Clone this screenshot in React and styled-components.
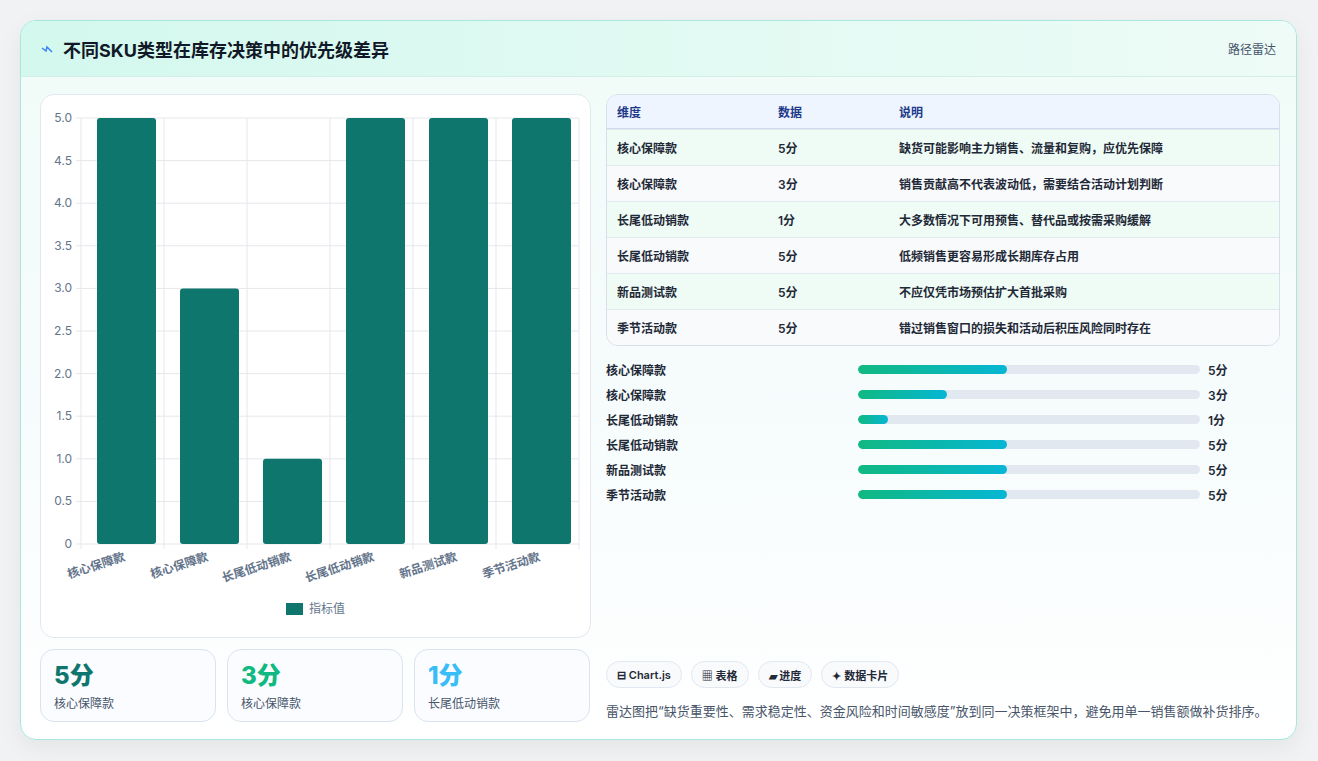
import styled, { createGlobalStyle } from "styled-components";

const Global = createGlobalStyle`
  body { margin: 0; background: #f1f2f4; font-family: Inter, "Noto Sans CJK SC", sans-serif; }
`;

const Page = styled.div`
  padding: 20px 21px 20px 20px;
  height: 761px;
  box-sizing: border-box;
`;

const Card = styled.div`
  height: 720px;
  box-sizing: border-box;
  border: 1px solid #a9e6de;
  border-radius: 16px;
  background: linear-gradient(180deg, #f0fcf8 0%, #f7fcfd 60%, #ffffff 100%);
  box-shadow: 0 8px 24px rgba(0,0,0,0.06);
  overflow: hidden;
  display: flex;
  flex-direction: column;
`;

const Header = styled.div`
  height: 55px;
  flex-shrink: 0;
  display: flex;
  align-items: center;
  justify-content: space-between;
  padding: 0 20px;
  background: linear-gradient(90deg, #d3f8ee 0%, #e3faf3 60%, #eefbf7 100%);
  border-bottom: 1px solid #d4efe8;
`;

const Title = styled.h1`
  margin: 0;
  font-size: 18px;
  font-weight: 700;
  color: #111827;
  display: flex;
  align-items: center;
  gap: 10px;
`;

const Badge = styled.span`font-size: 12px; color: #475569;`;

const Body = styled.div`
  flex: 1;
  display: grid;
  grid-template-columns: 551px 674px;
  gap: 15px;
  padding: 17px 18px 18px 19px;
`;

const Col = styled.div`display: flex; flex-direction: column;`;

const ChartCard = styled.div`
  height: 544px;
  box-sizing: border-box;
  background: #fff;
  border: 1px solid #e3e8ef;
  border-radius: 14px;
`;

const Stats = styled.div`
  margin-top: 11px;
  display: grid;
  grid-template-columns: repeat(3, 176px);
  gap: 11px;
`;

const Stat = styled.div`
  height: 73px;
  box-sizing: border-box;
  border: 1px solid #dbe3ee;
  border-radius: 14px;
  background: #fafcff;
  padding: 10px 13px;
`;

const StatValue = styled.div`
  font-size: 24px;
  font-weight: 800;
  color: ${p => p.$color};
  line-height: 32px;
`;

const StatLabel = styled.div`font-size: 12px; color: #475569; margin-top: 2px;`;

const Table = styled.div`
  border: 1px solid #d6dfea;
  border-radius: 12px;
  overflow: hidden;
`;

const Row = styled.div`
  display: grid;
  grid-template-columns: 161px 121px 1fr;
  height: 35px;
  align-items: center;
  padding-left: 10px;
  font-size: 12px;
  font-weight: 600;
  color: ${p => (p.$head ? "#1e3a8a" : "#1f2937")};
  background: ${p => (p.$head ? "#eef5fe" : p.$alt ? "#f8fafc" : "#effcf6")};
  border-top: ${p => (p.$head ? "none" : "1px solid #e2e8f0")};
  ${p => p.$head && "height: 33px; border-bottom: 1px solid #cfdbe8;"}
`;

const Bars = styled.div`
  margin-top: 11px;
  display: flex;
  flex-direction: column;
`;

const BarRow = styled.div`
  display: grid;
  grid-template-columns: 252px 350px 40px;
  gap: 0;
  align-items: center;
  height: 25px;
  font-size: 12px;
  font-weight: 600;
  color: #1f2937;
`;

const Track = styled.div`
  height: 9px;
  border-radius: 5px;
  background: #e2e8f0;
  margin-right: 8px;
  overflow: hidden;
`;

const Fill = styled.div`
  height: 100%;
  border-radius: 5px;
  background: linear-gradient(90deg, #10b981, #06b6d4);
`;

const Bottom = styled.div`margin-top: auto; padding-bottom: 2px;`;

const Chips = styled.div`display: flex; gap: 9px;`;

const Chip = styled.span`
  height: 27px;
  box-sizing: border-box;
  padding: 0 10px;
  display: inline-flex;
  align-items: center;
  gap: 4px;
  border: 1px solid #e2e8f0;
  border-radius: 14px;
  background: #f8fafc;
  font-size: 11px;
  font-weight: 600;
  color: #1f2937;
`;

const Note = styled.p`
  margin: 13px 0 0;
  font-size: 13px;
  color: #475569;
`;

const cats = ["核心保障款", "核心保障款", "长尾低动销款", "长尾低动销款", "新品测试款", "季节活动款"];
const vals = [5, 3, 1, 5, 5, 5];
const descs = [
  "缺货可能影响主力销售、流量和复购，应优先保障",
  "销售贡献高不代表波动低，需要结合活动计划判断",
  "大多数情况下可用预售、替代品或按需采购缓解",
  "低频销售更容易形成长期库存占用",
  "不应仅凭市场预估扩大首批采购",
  "错过销售窗口的损失和活动后积压风险同时存在",
];

function Chart() {
  const x0 = 40, x1 = 538, y0 = 449, yTop = 23;
  const h = y0 - yTop, step = (x1 - x0) / 6;
  const ticks = [0, 0.5, 1, 1.5, 2, 2.5, 3, 3.5, 4, 4.5, 5];
  return (
    <svg width="549" height="542" fontFamily='Inter, "Noto Sans CJK SC", sans-serif'>
      {ticks.map(t => {
        const y = y0 - (t / 5) * h;
        return (
          <g key={t}>
            <line x1={x0 - 5} x2={x1} y1={y} y2={y} stroke="#e5e7eb" />
            <text x={x0 - 9} y={y + 4} fontSize="12" fill="#64748b" textAnchor="end">{t === 0 ? "0" : t.toFixed(1)}</text>
          </g>
        );
      })}
      {Array.from({ length: 7 }).map((_, i) => (
        <line key={i} x1={x0 + i * step} x2={x0 + i * step} y1={yTop} y2={y0 + 5} stroke="#e5e7eb" />
      ))}
      {vals.map((v, i) => {
        const bh = (v / 5) * h;
        return <rect key={i} x={x0 + i * step + 16} y={y0 - bh} width={59} height={bh} rx="3" fill="#0f766e" />;
      })}
      {cats.map((c, i) => (
        <text key={i} transform={`translate(${x0 + i * step + 45},${y0 + 16}) rotate(-18)`} fontSize="12" fontWeight="600" fill="#64748b" textAnchor="end">{c}</text>
      ))}
      <rect x="245" y="508" width="17" height="12" fill="#0f766e" />
      <text x="268" y="518" fontSize="12" fill="#64748b">指标值</text>
    </svg>
  );
}

export default function App() {
  return (
    <Page>
      <Global />
      <Card>
        <Header>
          <Title>
            <svg width="12" height="10" viewBox="0 0 12 10"><path d="M1 4 L5 7 L6 3 L11 8" stroke="#3b82f6" strokeWidth="1.5" fill="none" /></svg>
            不同SKU类型在库存决策中的优先级差异
          </Title>
          <Badge>路径雷达</Badge>
        </Header>
        <Body>
          <Col>
            <ChartCard><Chart /></ChartCard>
            <Stats>
              <Stat><StatValue $color="#0f766e">5分</StatValue><StatLabel>核心保障款</StatLabel></Stat>
              <Stat><StatValue $color="#10b981">3分</StatValue><StatLabel>核心保障款</StatLabel></Stat>
              <Stat><StatValue $color="#38bdf8">1分</StatValue><StatLabel>长尾低动销款</StatLabel></Stat>
            </Stats>
          </Col>
          <Col>
            <Table>
              <Row $head><span>维度</span><span>数据</span><span>说明</span></Row>
              {cats.map((c, i) => (
                <Row key={i} $alt={i % 2 === 1}><span>{c}</span><span>{vals[i]}分</span><span>{descs[i]}</span></Row>
              ))}
            </Table>
            <Bars>
              {cats.map((c, i) => (
                <BarRow key={i}>
                  <span>{c}</span>
                  <Track><Fill style={{ width: `${vals[i] * 8.7}%` }} /></Track>
                  <span>{vals[i]}分</span>
                </BarRow>
              ))}
            </Bars>
            <Bottom>
              <Chips>
                <Chip>⊟ Chart.js</Chip>
                <Chip>▦ 表格</Chip>
                <Chip>▰ 进度</Chip>
                <Chip>✦ 数据卡片</Chip>
              </Chips>
              <Note>雷达图把“缺货重要性、需求稳定性、资金风险和时间敏感度”放到同一决策框架中，避免用单一销售额做补货排序。</Note>
            </Bottom>
          </Col>
        </Body>
      </Card>
    </Page>
  );
}
